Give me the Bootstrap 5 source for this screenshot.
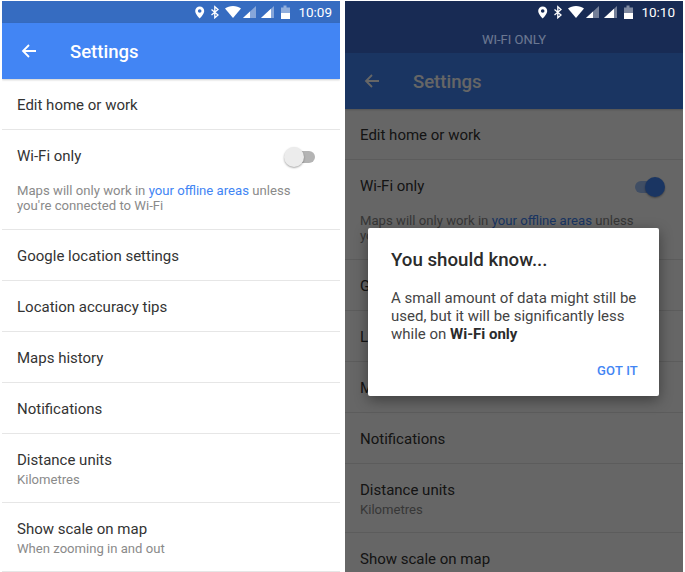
<!DOCTYPE html>
<html lang="en">
<head>
    <meta charset="UTF-8">
    <meta name="viewport" content="width=device-width, initial-scale=1.0">
    <title>Settings</title>
    <link href="https://cdn.jsdelivr.net/npm/bootstrap@5.3.2/dist/css/bootstrap.min.css" rel="stylesheet">
    <style>
        html, body { height: 572px; overflow: hidden; background: #fff; }
        body { font-family: Roboto, "Liberation Sans", sans-serif; color: #333; }
        .screens { height: 572px; padding: 1px 2px 0 2px; gap: 5px; }
        .phone { width: 338px; height: 571px; overflow: hidden; background: #fff; flex: none; }
        .status-bar { height: 22px; background: #366cc1; color: #fff; font-size: 13.5px; font-weight: 400; padding-right: 8px; gap: 7px; }
        .phone-dim .status-bar { background: #182b54; position: relative; z-index: 3; }
        .banner { height: 30px; padding-top: 3px; background: #182b54; color: #fff; font-size: 13px; position: relative; z-index: 3; }
        .banner span { opacity: .36; }
        .app-bar { height: 56px; background: #4285f4; color: #fff; font-size: 18.5px; font-weight: 500; padding-left: 19px; gap: 33px; box-shadow: 0 1px 2px rgba(0,0,0,.2); position: relative; }
        .app-bar span { padding-top: 4px; }
        .set-row { padding: 0 15px; border-bottom: 1px solid #e6e6e6; font-size: 15px; color: #333; }
        .set-row.one { height: 51px; padding-top: 3px; }
        .set-row.two { height: 69px; padding-top: 17px; line-height: 19px; }
        .set-sub { font-size: 13.1px; color: #8a8a8a; line-height: 19px; margin-top: 0; }
        .wifi-row { height: 100px; padding-top: 17px; }
        .wifi-top { height: 19px; line-height: 19px; }
        .wifi-note { font-size: 13.15px; line-height: 15px; color: #8a8a8a; margin-top: 17px; width: 300px; }
        .wifi-note span { color: #4285f4; }
        .toggle-track { width: 30px; height: 12px; border-radius: 6px; background: #b4b4b4; position: relative; margin-right: 10px; }
        .toggle-knob { width: 20px; height: 20px; border-radius: 50%; background: #ececec; position: absolute; top: -4px; left: -1px; box-shadow: 0 1px 2px rgba(0,0,0,.35); }
        .toggle-on { width: 27px; margin-right: 6px; background: #a1c2fa; }
        .toggle-on .toggle-knob { background: #4285f4; left: 10px; }
        .scrim { position: absolute; left: 0; right: 0; top: 0; bottom: 0; background: rgba(0,0,0,.6); z-index: 2; }
        .know-dialog { position: absolute; left: 23px; top: 227px; width: 291px; height: 168px; background: #fff; border-radius: 2px; z-index: 4; padding: 20px 20px 0 23px; box-shadow: 0 4px 14px rgba(0,0,0,.4); }
        .know-title { font-size: 18.7px; font-weight: 500; color: #2b2b2b; line-height: 24px; margin-bottom: 17px; }
        .know-body { font-size: 15px; line-height: 18px; color: #444; }
        .know-body b { font-weight: 700; color: #2b2b2b; }
        .know-btn { font-size: 13px; font-weight: 500; color: #4285f4; margin-top: 20px; margin-right: 1px; line-height: 16px; letter-spacing: .2px; }
    </style>
</head>
<body>
<svg width="0" height="0" class="position-absolute">
    <symbol id="status-icons" viewBox="0 0 96 14">
        <!-- pin -->
        <path fill="#fff" fill-rule="evenodd" d="M4.700 1.500A4.500 4.500 0 0 0 .2 6c0 3.400 4.500 7.500 4.500 7.500S9.200 9.400 9.200 6a4.500 4.500 0 0 0-4.500-4.500zm0 2.700a1.800 1.800 0 1 1 0 3.600 1.800 1.800 0 0 1 0-3.600z"/>
        <!-- bluetooth -->
        <path fill="none" stroke="#fff" stroke-width="1.300" d="M16.500 4.500l6.500 5.500-3.200 2.800V1.700L23 4.500 16.500 10"/>
        <!-- wifi -->
        <path fill="#fff" d="M30 3.500C32 2 35 1 38 1s6 1 8 2.500L38 13z"/>
        <!-- signal -->
        <path fill="#fff" d="M48 13L61 1v12z" opacity=".4"/>
        <path fill="#fff" d="M48 13l7-6.500V13z"/>
        <path fill="#fff" d="M66 13L79 1v12z" opacity=".4"/>
        <path fill="#fff" d="M66 13l10-9.200V13z"/>
        <!-- battery -->
        <path fill="#fff" opacity=".45" d="M86 2.500h2.500V.5h3v2H95V14h-9z"/>
        <path fill="#fff" d="M86 8h9v6h-9z"/>
    </symbol>
</svg>

<div class="screens d-flex">

    <!-- left phone -->
    <div class="phone d-flex flex-column">
        <div class="status-bar d-flex align-items-center justify-content-end">
            <svg width="96" height="14"><use href="#status-icons"/></svg>
            <span>10:09</span>
        </div>
        <div class="app-bar d-flex align-items-center flex-shrink-0">
            <svg width="16" height="16" viewBox="0 0 16 16"><path fill="none" stroke="#fff" stroke-width="1.800" d="M15 8H2M8 2L2 8l6 6"/></svg>
            <span>Settings</span>
        </div>
        <div class="set-row one d-flex align-items-center flex-shrink-0">Edit home or work</div>
        <div class="set-row wifi-row flex-shrink-0">
            <div class="wifi-top d-flex align-items-center justify-content-between">
                <span>Wi-Fi only</span>
                <div class="toggle-track"><div class="toggle-knob"></div></div>
            </div>
            <div class="wifi-note">Maps will only work in <span>your offline areas</span> unless you're connected to Wi-Fi</div>
        </div>
        <div class="set-row one d-flex align-items-center flex-shrink-0">Google location settings</div>
        <div class="set-row one d-flex align-items-center flex-shrink-0">Location accuracy tips</div>
        <div class="set-row one d-flex align-items-center flex-shrink-0">Maps history</div>
        <div class="set-row one d-flex align-items-center flex-shrink-0">Notifications</div>
        <div class="set-row two flex-shrink-0">Distance units<div class="set-sub">Kilometres</div></div>
        <div class="set-row two flex-shrink-0">Show scale on map<div class="set-sub">When zooming in and out</div></div>
    </div>

    <!-- right phone, dialog open -->
    <div class="phone phone-dim d-flex flex-column position-relative">
        <div class="status-bar d-flex align-items-center justify-content-end flex-shrink-0">
            <svg width="96" height="14"><use href="#status-icons"/></svg>
            <span>10:10</span>
        </div>
        <div class="banner d-flex align-items-center justify-content-center flex-shrink-0"><span>WI-FI ONLY</span></div>
        <div class="app-bar d-flex align-items-center flex-shrink-0">
            <svg width="16" height="16" viewBox="0 0 16 16"><path fill="none" stroke="#fff" stroke-width="1.800" d="M15 8H2M8 2L2 8l6 6"/></svg>
            <span>Settings</span>
        </div>
        <div class="set-row one d-flex align-items-center flex-shrink-0">Edit home or work</div>
        <div class="set-row wifi-row flex-shrink-0">
            <div class="wifi-top d-flex align-items-center justify-content-between">
                <span>Wi-Fi only</span>
                <div class="toggle-track toggle-on"><div class="toggle-knob"></div></div>
            </div>
            <div class="wifi-note">Maps will only work in <span>your offline areas</span> unless you're connected to Wi-Fi</div>
        </div>
        <div class="set-row one d-flex align-items-center flex-shrink-0">Google location settings</div>
        <div class="set-row one d-flex align-items-center flex-shrink-0">Location accuracy tips</div>
        <div class="set-row one d-flex align-items-center flex-shrink-0">Maps history</div>
        <div class="set-row one d-flex align-items-center flex-shrink-0">Notifications</div>
        <div class="set-row two flex-shrink-0">Distance units<div class="set-sub">Kilometres</div></div>
        <div class="set-row two flex-shrink-0">Show scale on map<div class="set-sub">When zooming in and out</div></div>

        <div class="scrim"></div>
        <div class="know-dialog">
            <div class="know-title">You should know...</div>
            <div class="know-body">A small amount of data might still be used, but it will be significantly less while on <b>Wi-Fi only</b></div>
            <div class="know-btn text-end">GOT IT</div>
        </div>
    </div>

</div>
<script src="https://cdn.jsdelivr.net/npm/bootstrap@5.3.2/dist/js/bootstrap.bundle.min.js"></script>
</body>
</html>
